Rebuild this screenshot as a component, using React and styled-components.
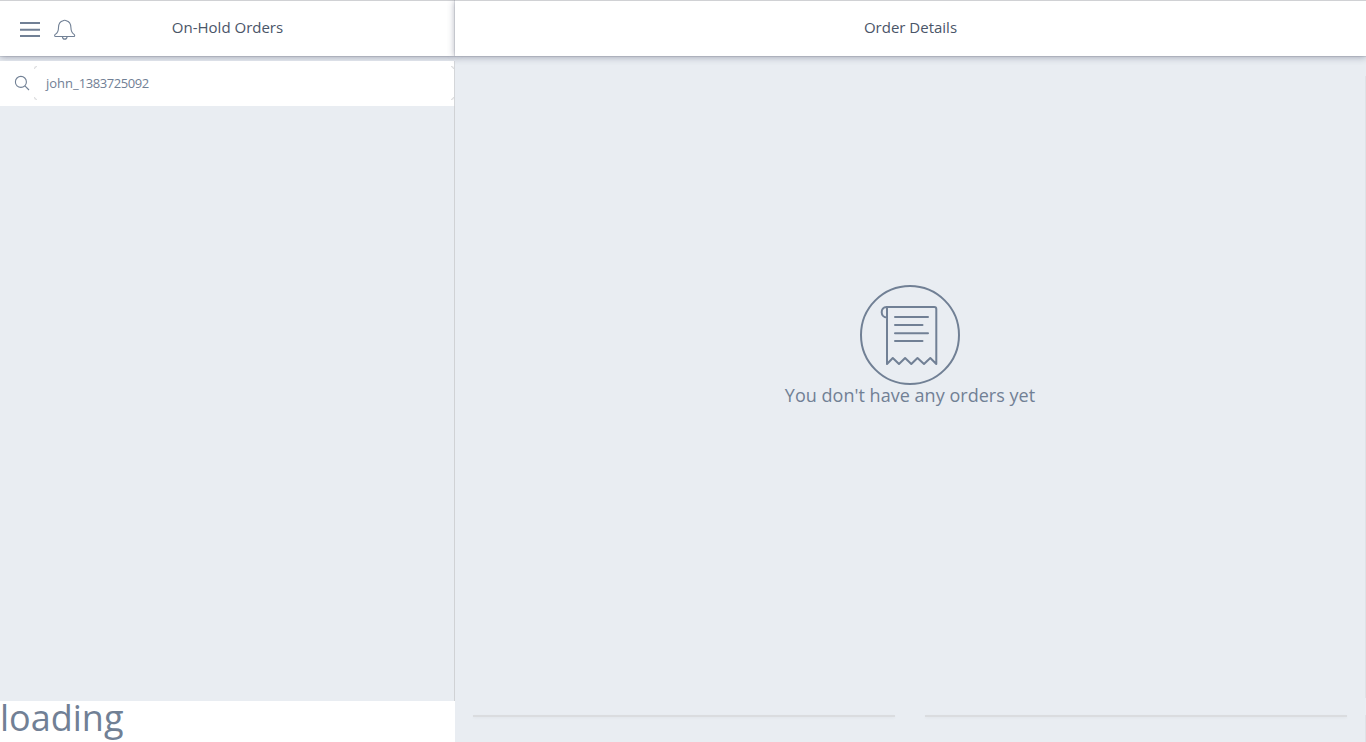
import React from "react";
import styled, { createGlobalStyle } from "styled-components";

const GlobalStyle = createGlobalStyle`
  *, *::before, *::after { box-sizing: border-box; }
  html, body, #root { height: 100%; }
  body {
    margin: 0;
    overflow: hidden;
    background: #fff;
    color: #718095;
    font-family: "Open Sans", "Noto Sans", sans-serif;
  }
`;

const Layout = styled.div`
  display: grid;
  grid-template-columns: 455px 1fr;
  height: 742px;
`;

const Column = styled.section`
  display: flex;
  flex-direction: column;
  min-width: 0;
  background: ${(p) => p.$background};
`;

const Header = styled.header`
  position: relative;
  z-index: ${(p) => p.$level};
  display: grid;
  grid-template-columns: 1fr auto 1fr;
  align-items: center;
  flex: 0 0 56px;
  padding: 0 20px;
  border-top: 1px solid #d0d1d4;
  background: #fff;
  box-shadow: 0 0 1px rgba(50, 55, 75, 0.65), 0 1px 7px rgba(60, 65, 90, 0.45);
`;

const Title = styled.h1`
  grid-column: 2;
  margin: 0;
  padding-bottom: 3px;
  color: #4a5568;
  font-size: 15px;
  font-weight: 400;
  line-height: 20px;
`;

const Actions = styled.div`
  display: flex;
  align-items: center;
  gap: 13px;
  padding-top: 2px;
`;

const SearchArea = styled.div`
  display: flex;
  flex-direction: column;
  background: #e9edf2;
`;

const SearchBar = styled.label`
  position: relative;
  z-index: 1;
  display: flex;
  align-items: center;
  flex: 0 0 45px;
  margin-top: 5px;
  padding: 0 0 1px 14px;
  border-right: 1px solid #d4d6d9;
  background: #fff;
`;

const SearchField = styled.div`
  position: relative;
  flex: 1;
  height: 34px;
  margin-left: 4px;
`;

const SearchValue = styled.div`
  padding: 7px 12px;
  font-size: 13px;
  line-height: 20px;
`;

const Digits = styled.span`
  letter-spacing: -0.43px;
`;

const Corner = styled.span`
  position: absolute;
  ${(p) => p.$v}: 0;
  ${(p) => p.$h}: 0;
  width: 3px;
  height: 3px;
  border: 0 solid #dcdddf;
  border-${(p) => p.$v}-width: 1px;
  border-${(p) => p.$h}-width: 1px;
  border-${(p) => p.$v}-${(p) => p.$h}-radius: 3px;
`;

const OrderList = styled.div`
  flex: 1;
  border-right: 1px solid #d0d2d5;
  background: #e9edf2;
`;

const Loading = styled.div`
  flex: 0 0 41px;
  font-size: 36px;
  line-height: 34px;
  background: #fff;
`;

const Empty = styled.div`
  display: flex;
  flex-direction: column;
  align-items: center;
  flex: 0 0 622px;
  margin-top: 20px;
  padding-top: 209px;
  border-right: 1px solid #dfe2e6;
`;

const Message = styled.p`
  margin: 0;
  font-size: 18px;
  line-height: 21px;
  letter-spacing: 0.03px;
`;

const Footer = styled.footer`
  display: flex;
  gap: 30px;
  height: 27px;
  margin-top: 17px;
  padding: 0 18px;
  border-right: 1px solid #dfe2e6;
`;

const FooterSlot = styled.div`
  flex: 1;
  height: 2px;
  background: #dadcdf;
  box-shadow: 0 1px 3px rgba(0, 0, 0, 0.04);
`;

const MenuIcon = () => (
  <svg width="20" height="15" viewBox="0 0 20 15" fill="none" stroke="#718095" strokeWidth="2">
    <path d="M0 1H20M0 7.7H20M0 14H20" />
  </svg>
);

const BellIcon = () => (
  <svg width="24" height="21" viewBox="0 0 24 21" fill="none" stroke="#718095" strokeWidth="1.1" strokeLinejoin="round">
    <path d="M10.2 1.7C10.6 1.1 12.8 1.1 13.2 1.7C16.8 2.5 17.8 5 17.9 8.4C18 12 19.2 14 21.1 15.4C22 16.3 21.8 17.5 21 17.5H2.5C1.5 17.5 1.3 16.3 2.2 15.4C4.4 14 5.5 12 5.5 8.4C5.6 5 6.6 2.5 10.2 1.7Z" />
    <path d="M9.4 17.6C9.6 21 13.9 21 14.1 17.6" />
  </svg>
);

const SearchIcon = () => (
  <svg width="16" height="16" viewBox="0 0 16 16" fill="none" stroke="#718095" strokeWidth="1.1">
    <circle cx="6.9" cy="6.9" r="5.5" />
    <path d="M10.9 10.9L15 15" />
  </svg>
);

const ReceiptIcon = () => (
  <svg width="100" height="100" viewBox="0 0 100 100" fill="none" stroke="#718095" strokeWidth="2" strokeLinejoin="round">
    <circle cx="50" cy="50" r="49" />
    <path d="M27 32.5C20 32.5 20 22 26.5 22H74.3Q76.3 22 76.3 24V79L70.3 73L64 79L57.5 73L51.3 79L45.1 73L39 79L32.8 73L27 79V22" />
    <path strokeLinecap="round" d="M35 32H68M35 40H62.5M35 48.2H68M35 56H62.5" />
  </svg>
);

export default function App() {
  return (
    <>
      <GlobalStyle />
      <Layout>
        <Column $background="#fff">
          <Header $level={1}>
            <Actions>
              <MenuIcon />
              <BellIcon />
            </Actions>
            <Title>On-Hold Orders</Title>
          </Header>
          <SearchArea>
            <SearchBar>
              <SearchIcon />
              <SearchField>
                <SearchValue>
                  john_<Digits>1383725092</Digits>
                </SearchValue>
                <Corner $v="top" $h="left" />
                <Corner $v="bottom" $h="left" />
                <Corner $v="top" $h="right" />
                <Corner $v="bottom" $h="right" />
              </SearchField>
            </SearchBar>
          </SearchArea>
          <OrderList />
          <Loading>loading</Loading>
        </Column>
        <Column $background="#e9edf2">
          <Header $level={2}>
            <Title>Order Details</Title>
          </Header>
          <Empty>
            <ReceiptIcon />
            <Message>You don't have any orders yet</Message>
          </Empty>
          <Footer>
            <FooterSlot />
            <FooterSlot />
          </Footer>
        </Column>
      </Layout>
    </>
  );
}
